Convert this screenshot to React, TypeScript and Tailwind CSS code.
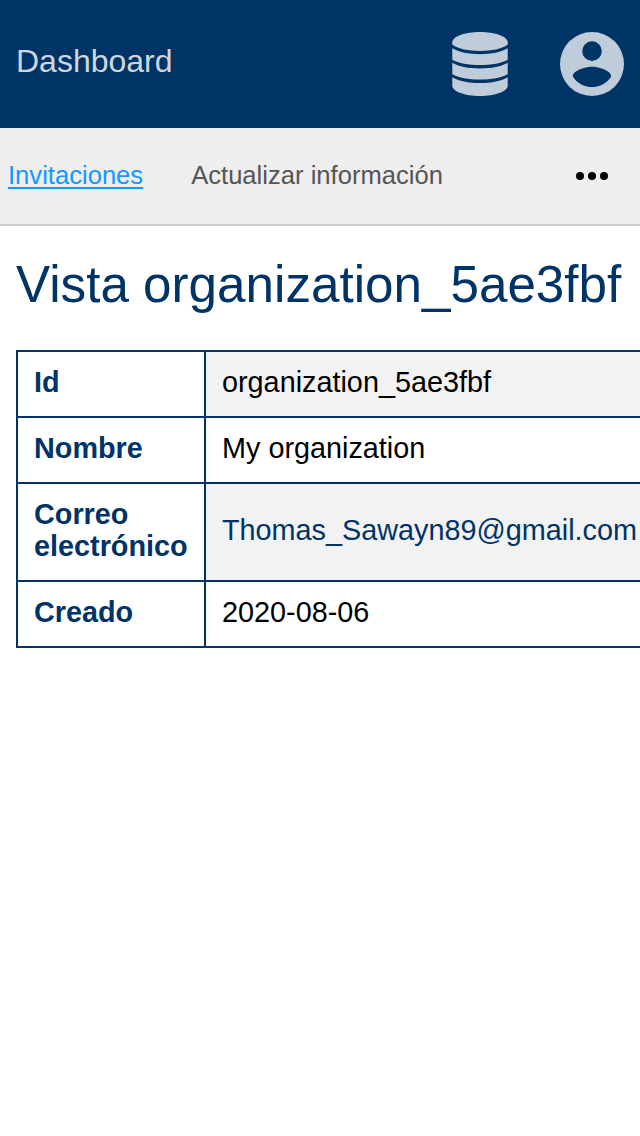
const rows = [
  { label: "Id", value: "organization_5ae3fbf" },
  { label: "Nombre", value: "My organization" },
  { label: "Correo electrónico", value: "Thomas_Sawayn89@gmail.com", email: true },
  { label: "Creado", value: "2020-08-06" },
];

function DatabaseIcon() {
  return (
    <svg className="h-16 w-14" viewBox="0 0 56 64" fill="currentColor">
      <path d="M.3 10.2C.3 4.6 12.7 0 28 0s27.700 4.600 27.700 10.200v2.600C49.500 16.900 39.500 19 28 19S6.500 16.900.3 12.800Z" />
      <path d="M.3 16.300C6.500 20.200 16.500 22.200 28 22.200s21.500-2 27.700-5.900v11.400C49.500 31.300 39.500 33 28 33S6.500 31.300.3 27.700Z" />
      <path d="M.3 30.800C6.500 34.700 16.500 36.500 28 36.500s21.500-1.800 27.700-5.700v11.400C49.500 45.800 39.500 47.500 28 47.500S6.500 45.800.3 42.200Z" />
      <path d="M.3 45.200C6.500 49.100 16.500 51 28 51s21.500-1.900 27.700-5.800v8.600C55.700 59.400 43.300 64 28 64S.3 59.400.3 53.800Z" />
    </svg>
  );
}

function AccountIcon() {
  return (
    <svg className="size-16" viewBox="0 0 64 64" fill="currentColor">
      <path fillRule="evenodd" d="M32 0a32 32 0 1 0 0 64 32 32 0 0 0 0-64Zm0 9.300a9.800 9.800 0 1 1 0 19.600 9.800 9.800 0 0 1 0-19.600Zm0 45.700c-8 0-15.070-4.100-19.200-10.600C12.900 38.300 25.600 34.700 32 34.700s19.100 3.600 19.200 9.700C47.070 50.900 40 55 32 55Z" />
    </svg>
  );
}

export default function App() {
  return (
    <div className="h-[1136px] w-[640px] overflow-hidden bg-white font-['Liberation_Sans',sans-serif] text-black">
      <header className="flex h-32 items-center justify-between bg-[#003366] px-4 text-[#bfccd9]">
        <a className="-mt-1.5 text-[32px] leading-10 text-[#ced7df]">Dashboard</a>
        <div className="flex items-center gap-[52px]">
          <DatabaseIcon />
          <AccountIcon />
        </div>
      </header>
      <nav className="flex h-[98px] items-center border-b-2 border-[#cccccc] bg-[#eeeeee] pl-2 text-[25.6px] leading-8 text-[#555555]">
        <a className="-mt-0.5 text-[#1199ff] underline decoration-2 underline-offset-[3px] [text-decoration-skip-ink:none]">Invitaciones</a>
        <a className="-mt-0.5 ml-12">Actualizar información</a>
        <button aria-label="Más" className="mr-8 ml-auto">
          <svg width="32" height="8" viewBox="0 0 32 8" fill="#000">
            <circle cx="4" cy="4" r="4" />
            <circle cx="16" cy="4" r="4" />
            <circle cx="28" cy="4" r="4" />
          </svg>
        </button>
      </nav>
      <main className="pl-4">
        <h1 className="pt-[29px] text-[51.2px] leading-[60px] text-[#003366]">Vista organization_5ae3fbf</h1>
        <table className="mt-[35px] w-[637px] table-fixed border-collapse text-[28.8px] leading-8">
          <colgroup>
            <col className="w-[188px]" />
            <col />
          </colgroup>
          <tbody>
            {rows.map((row) => (
              <tr key={row.label} className="odd:bg-[#f2f2f2]">
                <th className="border-2 border-[#003366] bg-white px-4 pt-3.5 pb-[18px] text-left font-bold text-[#003366]">{row.label}</th>
                <td className={row.email ? "border-2 border-[#003366] px-4 pt-3.5 pb-[18px] text-[#003366]" : "border-2 border-[#003366] px-4 pt-3.5 pb-[18px]"}>{row.value}</td>
              </tr>
            ))}
          </tbody>
        </table>
      </main>
    </div>
  );
}
